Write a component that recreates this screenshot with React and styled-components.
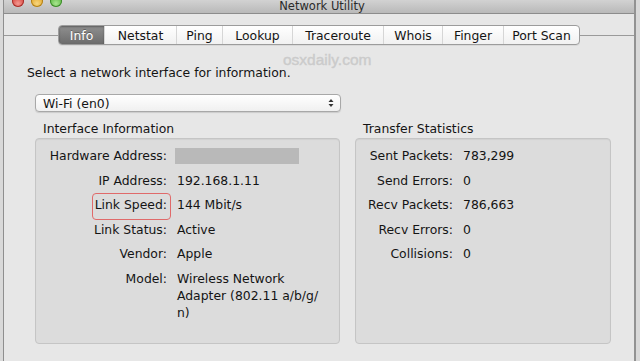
import React from "react";
import styled, { createGlobalStyle } from "styled-components";

const Global = createGlobalStyle`
  html, body { margin: 0; padding: 0; }
  body {
    width: 640px; height: 361px; overflow: hidden;
    background: #d9d9d9;
    font-family: "DejaVu Sans", "Liberation Sans", sans-serif;
    font-size: 12.4px;
    color: #141414;
  }
`;

const Window = styled.div`
  position: relative;
  margin: 0 3px 0 3px;
  width: 630px;
  height: 361px;
  background: #e7e7e7;
  border-left: 1px solid #8f8f8f;
  border-right: 2px solid #929292;
  display: flex;
  flex-direction: column;
`;

const TitleBar = styled.div`
  height: 13px;
  flex: none;
  background: linear-gradient(#d2d2d2, #b9b9b9);
  border-bottom: 1px solid #8c8c8c;
  display: flex;
  align-items: flex-end;
  justify-content: center;
  position: relative;
  overflow: hidden;
`;

const Lights = styled.div`
  position: absolute;
  left: 8px;
  top: -5px;
  display: flex;
  gap: 7px;
`;

const Light = styled.span`
  width: 12px;
  height: 12px;
  border-radius: 50%;
  background: radial-gradient(circle at 50% 70%, ${(p) => p.$hi} 0%, ${(p) => p.$c} 70%);
  box-shadow: inset 0 0 0 1px ${(p) => p.$b};
`;

const Title = styled.div`
  font-size: 11.5px;
  line-height: 13px;
  color: #2a2a2a;
  margin-left: 6px;
`;

const TabRow = styled.div`
  margin-top: 11px;
  height: 20px;
  display: flex;
  align-items: center;
`;

const Rule = styled.div`
  flex: 1;
  height: 1px;
  background: #9a9a9a;
`;

const Tabs = styled.div`
  display: flex;
  height: 18px;
  border: 1px solid #9c9c9c;
  border-radius: 4px;
  background: linear-gradient(#ffffff, #f1f1f1);
  overflow: hidden;
  box-shadow: 0 1px 0 rgba(0, 0, 0, 0.06);
`;

const Tab = styled.div`
  width: ${(p) => p.$w}px;
  display: flex;
  align-items: center;
  justify-content: center;
  font-size: 12.4px;
  color: ${(p) => (p.$active ? "#ffffff" : "#141414")};
  background: ${(p) => (p.$active ? "linear-gradient(#8f8f8f, #6c6c6c)" : "transparent")};
  box-shadow: ${(p) => (p.$active ? "inset 0 1px 2px rgba(0,0,0,0.35)" : "none")};
  border-left: ${(p) => (p.$first ? "none" : "1px solid #d6d6d6")};
  text-shadow: ${(p) => (p.$active ? "0 -1px 0 rgba(0,0,0,0.3)" : "none")};
`;

const Watermark = styled.div`
  position: absolute;
  left: 279px;
  top: 51px;
  font-family: "Liberation Sans", Arial, sans-serif;
  font-size: 15.5px;
  color: #cbcbcb;
  -webkit-text-stroke: 0.4px #cbcbcb;
`;

const Content = styled.div`
  padding-left: 23px;
  display: flex;
  flex-direction: column;
`;

const Prompt = styled.div`
  margin-top: 20px;
  line-height: 16px;
`;

const Select = styled.div`
  margin: 13px 0 0 8px;
  height: 16px;
  border: 1px solid #a8a8a8;
  border-radius: 4px;
  background: linear-gradient(#ffffff, #f0f0f0);
  box-shadow: 0 1px 1px rgba(0, 0, 0, 0.12);
  display: flex;
  align-items: center;
  justify-content: space-between;
  padding: 0 6px 0 7px;
  box-sizing: content-box;
  width: 291px;
`;

const Arrows = styled.svg`
  width: 6px;
  height: 10px;
`;

const Groups = styled.div`
  display: flex;
  gap: 15px;
  margin-left: 8px;
  margin-top: 9px;
`;

const Group = styled.div`
  display: flex;
  flex-direction: column;
  width: ${(p) => p.$w}px;
`;

const GroupLabel = styled.div`
  line-height: 16px;
  padding-left: 8px;
`;

const Box = styled.div`
  margin-top: 1px;
  height: 199px;
  background: #dcdcdc;
  border: 1px solid #c5c5c5;
  border-radius: 4px;
  padding-top: 5px;
  box-shadow: inset 0 1px 1px rgba(0, 0, 0, 0.05);
`;

const Row = styled.div`
  display: flex;
  align-items: baseline;
  min-height: 24.5px;
`;

const Label = styled.div`
  flex: none;
  width: ${(p) => p.$w}px;
  text-align: right;
  line-height: 24.5px;
  white-space: nowrap;
`;

const Marked = styled.span`
  position: relative;
  &::after {
    content: "";
    position: absolute;
    left: -3px;
    right: -4px;
    top: -4px;
    bottom: -8px;
    border: 1px solid #e06a6a;
    border-radius: 4px;
  }
`;

const Value = styled.div`
  margin-left: 10px;
  line-height: ${(p) => (p.$multi ? "17px" : "24.5px")};
  white-space: nowrap;
`;

const Redacted = styled.div`
  align-self: center;
  margin-left: 8px;
  width: 124px;
  height: 16px;
  background: #b9b9b9;
`;

const info = [
  ["IP Address:", "192.168.1.11"],
  ["Link Speed:", "144 Mbit/s", true],
  ["Link Status:", "Active"],
  ["Vendor:", "Apple"],
];

const stats = [
  ["Sent Packets:", "783,299"],
  ["Send Errors:", "0"],
  ["Recv Packets:", "786,663"],
  ["Recv Errors:", "0"],
  ["Collisions:", "0"],
];

const tabs = [
  ["Info", 45],
  ["Netstat", 71],
  ["Ping", 45],
  ["Lookup", 69],
  ["Traceroute", 90],
  ["Whois", 58],
  ["Finger", 60],
  ["Port Scan", 75],
];

export default function App() {
  return (
    <>
      <Global />
      <Window>
        <TitleBar>
          <Lights>
            <Light $c="#d8453e" $hi="#f39a92" $b="#a5312c" />
            <Light $c="#e3a82a" $hi="#f7d680" $b="#b0801c" />
            <Light $c="#5cb843" $hi="#a9e58f" $b="#3f8a2d" />
          </Lights>
          <Title>Network Utility</Title>
        </TitleBar>
        <TabRow>
          <Rule />
          <Tabs>
            {tabs.map(([t, w], i) => (
              <Tab key={t} $w={w} $active={i === 0} $first={i === 0}>
                {t}
              </Tab>
            ))}
          </Tabs>
          <Rule />
        </TabRow>
        <Watermark>osxdaily.com</Watermark>
        <Content>
          <Prompt>Select a network interface for information.</Prompt>
          <Select>
            <span>Wi-Fi (en0)</span>
            <Arrows viewBox="0 0 6 10">
              <path d="M0.5 4 L3 1 L5.5 4 Z" fill="#333" />
              <path d="M0.5 6 L3 9 L5.5 6 Z" fill="#333" />
            </Arrows>
          </Select>
          <Groups>
            <Group $w={305}>
              <GroupLabel>Interface Information</GroupLabel>
              <Box>
                <Row>
                  <Label $w={131}>Hardware Address:</Label>
                  <Redacted />
                </Row>
                {info.map(([l, v, hl]) => (
                  <Row key={l}>
                    <Label $w={131}>{hl ? <Marked>{l}</Marked> : l}</Label>
                    <Value>{v}</Value>
                  </Row>
                ))}
                <Row>
                  <Label $w={131}>Model:</Label>
                  <Value $multi>
                    Wireless Network
                    <br />
                    Adapter (802.11 a/b/g/
                    <br />
                    n)
                  </Value>
                </Row>
              </Box>
            </Group>
            <Group $w={256}>
              <GroupLabel>Transfer Statistics</GroupLabel>
              <Box>
                {stats.map(([l, v]) => (
                  <Row key={l}>
                    <Label $w={97}>{l}</Label>
                    <Value>{v}</Value>
                  </Row>
                ))}
              </Box>
            </Group>
          </Groups>
        </Content>
      </Window>
    </>
  );
}
